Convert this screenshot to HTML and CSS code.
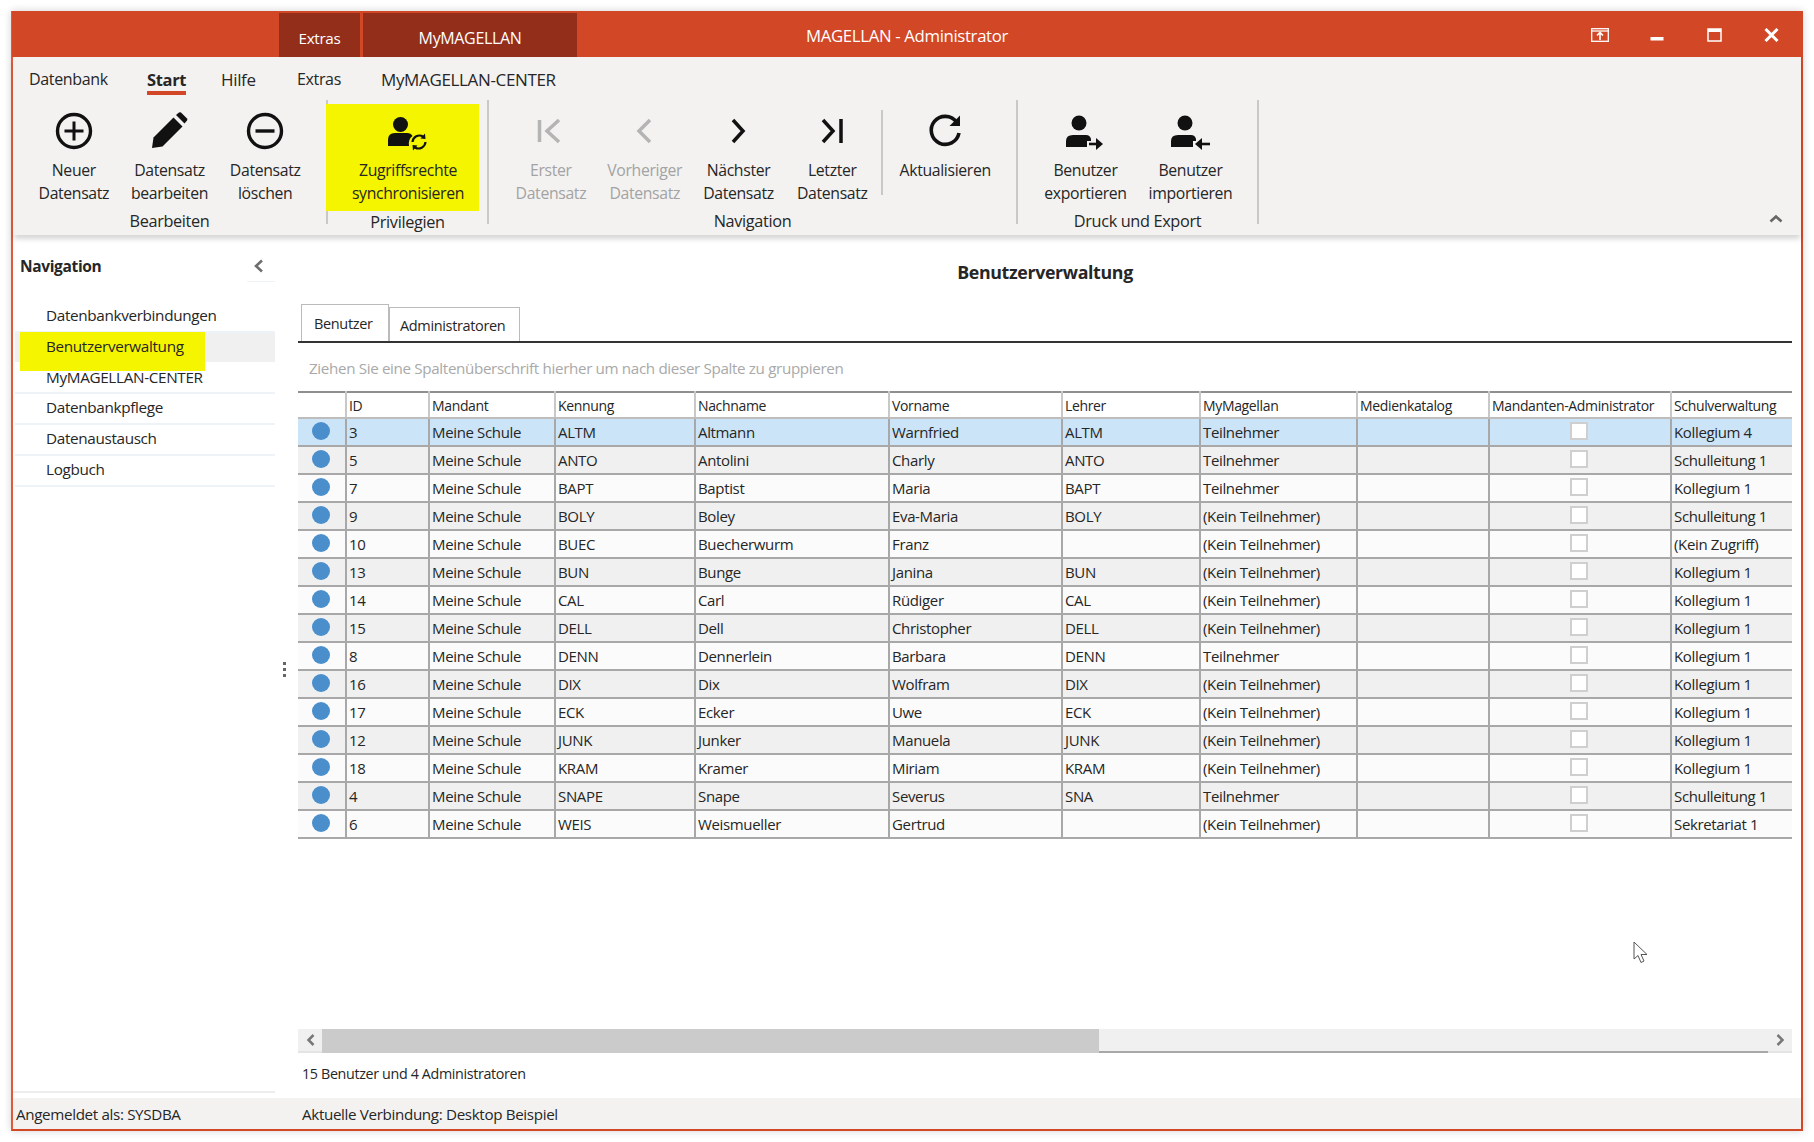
FILE: index.html
```html
<!DOCTYPE html>
<html lang="de">

<head>
    <meta charset="UTF-8">
    <title>MAGELLAN - Administrator</title>
    <link rel="stylesheet" href="styles.css">
</head>

<body>
    <div class="window">
        <!-- Title bar -->
        <header class="titlebar">
            <div class="context-tabs">
                <span class="context-tab context-extras">Extras</span>
                <span class="context-tab context-my">MyMAGELLAN</span>
            </div>
            <div class="title">MAGELLAN - Administrator</div>
            <div class="win-controls">
                <svg class="win-icon" width="18" height="14" viewBox="0 0 18 14" fill="none" stroke="#fff" stroke-width="1.3">
                    <rect x="0.7" y="0.7" width="16.6" height="12.6" />
                    <path d="M1 3h16" />
                    <path d="M9 12V5M6 7.5 9 4.5l3 3" stroke-width="1.6" />
                </svg>
                <svg class="win-icon" width="14" height="14" viewBox="0 0 14 14" fill="#fff">
                    <rect x="0.5" y="9" width="13" height="3.5" />
                </svg>
                <svg class="win-icon" width="15" height="14" viewBox="0 0 15 14" fill="none" stroke="#fff" stroke-width="1.5">
                    <rect x="1" y="1" width="13" height="12" />
                    <path d="M1 2.5h13" stroke-width="3" />
                </svg>
                <svg class="win-icon" width="15" height="14" viewBox="0 0 15 14" fill="none" stroke="#fff" stroke-width="3">
                    <path d="M1.5 1 13.500 13M13.500 1 1.500 13" />
                </svg>
            </div>
        </header>

        <!-- Ribbon -->
        <section class="ribbon">
            <nav class="ribbon-tabs">
                <span class="ribbon-tab tab-datenbank">Datenbank</span>
                <span class="ribbon-tab tab-start">Start</span>
                <span class="ribbon-tab tab-hilfe">Hilfe</span>
                <span class="ribbon-tab tab-extras">Extras</span>
                <span class="ribbon-tab">MyMAGELLAN-CENTER</span>
            </nav>
            <div class="ribbon-groups">
                <div class="group group-edit">
                    <div class="group-buttons">
                        <div class="rb rb-edit">
                            <svg class="rb-icon" width="40" height="40" viewBox="0 0 40 40" fill="none" stroke="#111" stroke-width="3.4">
                                <circle cx="20" cy="20" r="16.500" />
                                <path d="M20 10.500v19M10.500 20h19" stroke-width="3" />
                            </svg>
                            <span>Neuer<br>Datensatz</span>
                        </div>
                        <div class="rb rb-edit">
                            <svg class="rb-icon" width="40" height="40" viewBox="0 0 40 40" fill="#111">
                                <path d="M2 37 3.500 26.500 23.500 6.500 32.500 15.500 12.500 35.500Z" />
                                <path d="M26 4 29 1.500Q30 .8 31 1.500L37 7.500Q37.800 8.500 37 9.500L34.500 12.500Z" />
                            </svg>
                            <span>Datensatz<br>bearbeiten</span>
                        </div>
                        <div class="rb rb-edit">
                            <svg class="rb-icon" width="40" height="40" viewBox="0 0 40 40" fill="none" stroke="#111" stroke-width="3.4">
                                <circle cx="20" cy="20" r="16.500" />
                                <path d="M10.500 20h19" stroke-width="3.400" />
                            </svg>
                            <span>Datensatz<br>löschen</span>
                        </div>
                    </div>
                    <div class="group-label">Bearbeiten</div>
                </div>

                <div class="group group-priv">
                    <div class="group-buttons">
                        <div class="rb rb-marked">
                            <svg class="rb-icon" width="40" height="40" viewBox="0 0 40 40" fill="#111">
                                <circle cx="12.500" cy="13.500" r="7.500" />
                                <path d="M0 35V29Q0 22 7 22H19Q23 22 24.500 25 20 28 21 35Z" />
                                <g fill="none" stroke="#111" stroke-width="2.200">
                                    <path d="M24.500 31A7 7 0 0 1 35 25.500" />
                                    <path d="M37.500 31A7 7 0 0 1 27 36.500" />
                                </g>
                                <path d="M32.500 27.500 37.500 28 37 22.500ZM29.500 34.500 24.500 34 25 39.500Z" />
                            </svg>
                            <span>Zugriffsrechte<br>synchronisieren</span>
                        </div>
                    </div>
                    <div class="group-label">Privilegien</div>
                </div>

                <div class="group group-nav">
                    <div class="group-buttons">
                        <div class="rb rb-nav rb-off">
                            <svg class="rb-icon" width="40" height="40" viewBox="0 0 40 40" fill="none" stroke="#b4b4b4" stroke-width="3.500">
                                <path d="M8.500 9V31M28 9 16 20 28 31" />
                            </svg>
                            <span>Erster<br>Datensatz</span>
                        </div>
                        <div class="rb rb-nav rb-off">
                            <svg class="rb-icon" width="40" height="40" viewBox="0 0 40 40" fill="none" stroke="#b4b4b4" stroke-width="3.500">
                                <path d="M25 9 14 20 25 31" />
                            </svg>
                            <span>Vorheriger<br>Datensatz</span>
                        </div>
                        <div class="rb rb-nav">
                            <svg class="rb-icon" width="40" height="40" viewBox="0 0 40 40" fill="none" stroke="#111" stroke-width="3.500">
                                <path d="M15 9 25 20 15 31" />
                            </svg>
                            <span>Nächster<br>Datensatz</span>
                        </div>
                        <div class="rb rb-nav">
                            <svg class="rb-icon" width="40" height="40" viewBox="0 0 40 40" fill="none" stroke="#111" stroke-width="3.500">
                                <path d="M11 9 21 20 11 31M29 8V32" />
                            </svg>
                            <span>Letzter<br>Datensatz</span>
                        </div>
                        <div class="rb-sep"></div>
                        <div class="rb rb-refresh">
                            <svg class="rb-icon" width="40" height="40" viewBox="0 0 40 40" fill="none" stroke="#111" stroke-width="3.600">
                                <path d="M31.500 11A14 14 0 1 0 34 22" />
                                <path d="M35 4.500V15H24.500Z" fill="#111" stroke="none" />
                            </svg>
                            <span>Aktualisieren</span>
                        </div>
                    </div>
                    <div class="group-label">Navigation</div>
                </div>

                <div class="group group-export">
                    <div class="group-buttons">
                        <div class="rb rb-user">
                            <svg class="rb-icon" width="40" height="40" viewBox="0 0 40 40" fill="#111">
                                <circle cx="13" cy="12" r="7.500" />
                                <path d="M0 36V30Q0 24 7 24H20Q24 24 25 28V30H21V36Z" />
                                <path d="M23 33H31" fill="none" stroke="#111" stroke-width="2.600" />
                                <path d="M30 27 37 33 30 39Z" />
                            </svg>
                            <span>Benutzer<br>exportieren</span>
                        </div>
                        <div class="rb rb-user">
                            <svg class="rb-icon" width="40" height="40" viewBox="0 0 40 40" fill="#111">
                                <circle cx="14" cy="12" r="7.500" />
                                <path d="M0 36V30Q0 24 7 24H20Q24 24 25 28V30H22V36Z" />
                                <path d="M30 33H39" fill="none" stroke="#111" stroke-width="2.600" />
                                <path d="M31 27 24 33 31 39Z" />
                            </svg>
                            <span>Benutzer<br>importieren</span>
                        </div>
                    </div>
                    <div class="group-label">Druck und Export</div>
                </div>

                <svg class="ribbon-collapse" width="14" height="9" viewBox="0 0 14 9" fill="none" stroke="#666" stroke-width="2.600">
                    <path d="M1.500 7.500 7 2.500l5.500 5" />
                </svg>
            </div>
        </section>

        <!-- Navigation + content -->
        <div class="workspace">
            <aside class="sidebar">
                <div class="sidebar-head">
                    <span class="sidebar-title">Navigation</span>
                    <svg class="sidebar-chevron" width="11" height="14" viewBox="0 0 11 14" fill="none" stroke="#6e6e6e" stroke-width="2.600">
                        <path d="M9 1.500 3 7l6 5.500" />
                    </svg>
                </div>
                <ul class="sidebar-list">
                    <li>Datenbankverbindungen</li>
                    <li class="selected"><span class="marker"></span><span class="sidebar-text">Benutzerverwaltung</span></li>
                    <li>MyMAGELLAN-CENTER</li>
                    <li>Datenbankpflege</li>
                    <li>Datenaustausch</li>
                    <li>Logbuch</li>
                </ul>
            </aside>

            <div class="splitter"><i></i><i></i><i></i></div>

            <main class="content">
                <h1 class="content-title">Benutzerverwaltung</h1>
                <div class="page-tabs">
                    <span class="page-tab active">Benutzer</span>
                    <span class="page-tab">Administratoren</span>
                </div>
                <div class="group-hint">Ziehen Sie eine Spaltenüberschrift hierher um nach dieser Spalte zu gruppieren</div>
                <div class="grid-wrap">
                    <table class="grid">
                        <colgroup>
                            <col class="c-state"><col class="c-id"><col class="c-mandant"><col class="c-kennung">
                            <col class="c-nachname"><col class="c-vorname"><col class="c-lehrer"><col class="c-my">
                            <col class="c-medien"><col class="c-admin"><col class="c-schul">
                        </colgroup>
                        <thead>
                            <tr>
                                <th></th><th>ID</th><th>Mandant</th><th>Kennung</th><th>Nachname</th><th>Vorname</th>
                                <th>Lehrer</th><th>MyMagellan</th><th>Medienkatalog</th><th>Mandanten-Administrator</th><th>Schulverwaltung</th>
                            </tr>
                        </thead>
                        <tbody>
                            <tr class="current"><td><i class="dot"></i></td><td>3</td><td>Meine Schule</td><td>ALTM</td><td>Altmann</td><td>Warnfried</td><td>ALTM</td><td>Teilnehmer</td><td></td><td><i class="check"></i></td><td>Kollegium 4</td></tr>
                            <tr><td><i class="dot"></i></td><td>5</td><td>Meine Schule</td><td>ANTO</td><td>Antolini</td><td>Charly</td><td>ANTO</td><td>Teilnehmer</td><td></td><td><i class="check"></i></td><td>Schulleitung 1</td></tr>
                            <tr><td><i class="dot"></i></td><td>7</td><td>Meine Schule</td><td>BAPT</td><td>Baptist</td><td>Maria</td><td>BAPT</td><td>Teilnehmer</td><td></td><td><i class="check"></i></td><td>Kollegium 1</td></tr>
                            <tr><td><i class="dot"></i></td><td>9</td><td>Meine Schule</td><td>BOLY</td><td>Boley</td><td>Eva-Maria</td><td>BOLY</td><td>(Kein Teilnehmer)</td><td></td><td><i class="check"></i></td><td>Schulleitung 1</td></tr>
                            <tr><td><i class="dot"></i></td><td>10</td><td>Meine Schule</td><td>BUEC</td><td>Buecherwurm</td><td>Franz</td><td></td><td>(Kein Teilnehmer)</td><td></td><td><i class="check"></i></td><td>(Kein Zugriff)</td></tr>
                            <tr><td><i class="dot"></i></td><td>13</td><td>Meine Schule</td><td>BUN</td><td>Bunge</td><td>Janina</td><td>BUN</td><td>(Kein Teilnehmer)</td><td></td><td><i class="check"></i></td><td>Kollegium 1</td></tr>
                            <tr><td><i class="dot"></i></td><td>14</td><td>Meine Schule</td><td>CAL</td><td>Carl</td><td>Rüdiger</td><td>CAL</td><td>(Kein Teilnehmer)</td><td></td><td><i class="check"></i></td><td>Kollegium 1</td></tr>
                            <tr><td><i class="dot"></i></td><td>15</td><td>Meine Schule</td><td>DELL</td><td>Dell</td><td>Christopher</td><td>DELL</td><td>(Kein Teilnehmer)</td><td></td><td><i class="check"></i></td><td>Kollegium 1</td></tr>
                            <tr><td><i class="dot"></i></td><td>8</td><td>Meine Schule</td><td>DENN</td><td>Dennerlein</td><td>Barbara</td><td>DENN</td><td>Teilnehmer</td><td></td><td><i class="check"></i></td><td>Kollegium 1</td></tr>
                            <tr><td><i class="dot"></i></td><td>16</td><td>Meine Schule</td><td>DIX</td><td>Dix</td><td>Wolfram</td><td>DIX</td><td>(Kein Teilnehmer)</td><td></td><td><i class="check"></i></td><td>Kollegium 1</td></tr>
                            <tr><td><i class="dot"></i></td><td>17</td><td>Meine Schule</td><td>ECK</td><td>Ecker</td><td>Uwe</td><td>ECK</td><td>(Kein Teilnehmer)</td><td></td><td><i class="check"></i></td><td>Kollegium 1</td></tr>
                            <tr><td><i class="dot"></i></td><td>12</td><td>Meine Schule</td><td>JUNK</td><td>Junker</td><td>Manuela</td><td>JUNK</td><td>(Kein Teilnehmer)</td><td></td><td><i class="check"></i></td><td>Kollegium 1</td></tr>
                            <tr><td><i class="dot"></i></td><td>18</td><td>Meine Schule</td><td>KRAM</td><td>Kramer</td><td>Miriam</td><td>KRAM</td><td>(Kein Teilnehmer)</td><td></td><td><i class="check"></i></td><td>Kollegium 1</td></tr>
                            <tr><td><i class="dot"></i></td><td>4</td><td>Meine Schule</td><td>SNAPE</td><td>Snape</td><td>Severus</td><td>SNA</td><td>Teilnehmer</td><td></td><td><i class="check"></i></td><td>Schulleitung 1</td></tr>
                            <tr><td><i class="dot"></i></td><td>6</td><td>Meine Schule</td><td>WEIS</td><td>Weismueller</td><td>Gertrud</td><td></td><td>(Kein Teilnehmer)</td><td></td><td><i class="check"></i></td><td>Sekretariat 1</td></tr>
                        </tbody>
                    </table>
                    <svg class="cursor" width="16" height="23" viewBox="0 0 16 23" fill="#fff" stroke="#555" stroke-width="1">
                        <path d="M1 1V18L5 14.500 8 21.500 11 20 8 13.500H14Z" />
                    </svg>
                </div>
                <div class="scrollbar">
                    <div class="scroll-btn">
                        <svg width="9" height="12" viewBox="0 0 9 12" fill="none" stroke="#777" stroke-width="2.500"><path d="M7.500 1 2.500 6l5 5" /></svg>
                    </div>
                    <div class="scroll-thumb"></div>
                    <div class="scroll-track"></div>
                    <div class="scroll-btn">
                        <svg width="9" height="12" viewBox="0 0 9 12" fill="none" stroke="#777" stroke-width="2.500"><path d="M1.500 1l5 5-5 5" /></svg>
                    </div>
                </div>
                <div class="count">15 Benutzer und 4 Administratoren</div>
            </main>
        </div>

        <!-- Status bar -->
        <footer class="statusbar">
            <span class="status-user">Angemeldet als: SYSDBA</span>
            <span>Aktuelle Verbindung: Desktop Beispiel</span>
        </footer>
    </div>
</body>

</html>
```

FILE: styles.css
```css
/* General Reset */
* {
    margin: 0;
    padding: 0;
    box-sizing: border-box;
}

:root {
    --accent: #d24726;
    --accent-dark: #922e19;
    --ribbon-bg: #f3f2f1;
    --text: #262626;
    --text-off: #a3a3a3;
    --grid-line: #a8a8a8;
    --highlight: #f5f500;
}

body {
    width: 1814px;
    height: 1142px;
    overflow: hidden;
    background: #fff;
    font-family: "Open Sans", "Noto Sans", sans-serif;
    font-size: 15px;
    letter-spacing: -0.35px;
    color: var(--text);
}

.window {
    display: flex;
    flex-direction: column;
    width: 1792px;
    height: 1120px;
    margin: 11px 0 0 11px;
    border: 2px solid #e2583a;
    border-top: 1px solid var(--accent);
    border-bottom-color: var(--accent);
    border-right-color: var(--accent);
    box-shadow: 0 0 8px rgba(0, 0, 0, 0.18);
    background: #fff;
}

/* Title bar */
.titlebar {
    position: relative;
    display: flex;
    flex: 0 0 45px;
    margin: 0 -1px;
    background: var(--accent);
    color: #fff;
}

.context-tabs {
    display: flex;
    gap: 3px;
    margin-left: 267px;
    padding-top: 1px;
}

.context-tab {
    display: flex;
    align-items: center;
    justify-content: center;
    padding-top: 6px;
    background: var(--accent-dark);
    font-size: 15.300px;
}

.context-extras {
    width: 81px;
}

.context-my {
    width: 214px;
    font-size: 16px;
}

.title {
    position: absolute;
    left: 0;
    right: 0;
    top: 12px;
    text-align: center;
    font-size: 16.800px;
}

.win-controls {
    margin-left: auto;
    display: flex;
    align-items: flex-start;
    padding: 16px 23px 0 0;
}

.win-icon:nth-child(1) {
    margin-right: 41px;
}

.win-icon:nth-child(2) {
    margin-right: 43px;
}

.win-icon:nth-child(3) {
    margin-right: 42px;
}

/* Ribbon */
.ribbon {
    position: relative;
    z-index: 2;
    flex: 0 0 178px;
    background: var(--ribbon-bg);
    box-shadow: 0 5px 5px -1px rgba(0, 0, 0, 0.16);
}

.ribbon-tabs {
    display: flex;
    height: 43px;
    padding: 12px 0 0 16px;
    font-size: 17px;
    line-height: 21px;
}

.ribbon-tab {
    height: 29px;
}

.tab-datenbank {
    width: 118px;
    font-size: 16px;
}

.tab-start {
    width: 74px;
    font-size: 16.500px;
    font-weight: 700;
}

.tab-start::after {
    content: "";
    display: block;
    width: 39px;
    height: 4px;
    margin-top: 1px;
    background: var(--accent);
}

.tab-hilfe {
    width: 76px;
}

.tab-extras {
    width: 84px;
    font-size: 16px;
}

.ribbon-groups {
    position: relative;
    display: flex;
    height: 124px;
    margin-left: 13px;
}

.group {
    display: flex;
    flex-direction: column;
    border-right: 2px solid #c8c8c8;
    text-align: center;
}

.group-buttons {
    display: flex;
    flex: 0 0 110px;
}

.group-label {
    line-height: 20px;
    margin-top: 1px;
    font-size: 16.300px;
}

.group-edit {
    width: 302px;
    padding-right: 13px;
}

.group-priv {
    width: 161px;
}

.group-nav {
    width: 529px;
    padding-left: 15px;
}

.group-nav .group-label {
    margin-left: -15px;
}

.group-export {
    width: 241px;
    padding-left: 15px;
}

.group-export .group-label {
    margin-left: -15px;
}

.rb {
    display: flex;
    flex-direction: column;
    align-items: center;
    padding-top: 11px;
    line-height: 23px;
    white-space: nowrap;
    font-size: 15.800px;
}

.rb-icon {
    display: block;
    flex: none;
    margin-bottom: 8px;
}

.rb-edit {
    width: 96px;
}

.rb-nav {
    width: 93.800px;
}

.rb-user {
    width: 105px;
}

.rb-refresh {
    width: 124px;
}

.rb-off {
    color: var(--text-off);
}

.rb-sep {
    align-self: flex-start;
    width: 2px;
    height: 85px;
    margin: 10px 0 0 2px;
    background: #c8c8c8;
}

.rb-marked {
    width: 153px;
    height: 107px;
    margin: 4px 0 0 -2px;
    padding: 7px 0 0 11px;
    background: var(--highlight);
}

.ribbon-collapse {
    position: absolute;
    right: 18px;
    top: 114px;
}

/* Sidebar */
.workspace {
    display: flex;
    flex: 1;
    min-height: 0;
}

.sidebar {
    flex: 0 0 262px;
    border-bottom: 2px solid #ededed;
    margin-bottom: 5px;
}

.sidebar-head {
    position: relative;
    display: flex;
    justify-content: space-between;
    align-items: center;
    height: 46px;
    padding: 16px 11px 0 7px;
}

.sidebar-head::after {
    content: "";
    position: absolute;
    right: 0;
    bottom: -1px;
    width: 28px;
    height: 1px;
    background: #eef3f8;
}

.sidebar-title {
    font-weight: 700;
    font-size: 15.500px;
}

.sidebar-list {
    list-style: none;
    margin: 21px 0 0 2px;
    font-size: 15.300px;
}

.sidebar-list li {
    position: relative;
    height: 30.750px;
    padding: 0 0 0 31px;
    line-height: 26px;
    border-bottom: 2px solid #eef3f8;
}

.sidebar-list li.selected {
    background: #f0f0f0;
    border-bottom-color: #fff;
}

.marker {
    position: absolute;
    left: 5px;
    top: -1px;
    width: 185px;
    height: 39px;
    background: var(--highlight);
}

.sidebar-text {
    position: relative;
}

.splitter {
    display: flex;
    flex: 0 0 23px;
    flex-direction: column;
    align-items: flex-start;
    justify-content: center;
    gap: 3px;
    padding: 6px 0 0 8px;
}

.splitter i {
    width: 3px;
    height: 3px;
    background: #666;
}

/* Main content */
.content {
    display: flex;
    flex: 1;
    flex-direction: column;
    min-width: 0;
    padding-right: 9px;
}

.content-title {
    margin-top: 25px;
    text-align: center;
    font-size: 17.800px;
    line-height: 24px;
}

.page-tabs {
    display: flex;
    align-items: flex-end;
    height: 39px;
    margin-top: 20px;
    padding-left: 3px;
    border-bottom: 2px solid #333;
}

.page-tab {
    height: 34px;
    padding: 8px 12px 0 10px;
    border: 1px solid #bbb;
    border-bottom: none;
    font-size: 14.500px;
}

.page-tab:last-child {
    padding-right: 14px;
}

.page-tab.active {
    width: 88px;
    height: 37px;
    padding: 9px 0 0 12px;
}

.group-hint {
    height: 20px;
    margin-top: 15px;
    padding-left: 11px;
    line-height: 20px;
    color: #a9a9a9;
    font-size: 15.200px;
}

.grid-wrap {
    position: relative;
    flex: 1;
    margin-top: 13px;
}

.grid {
    width: 1494px;
    table-layout: fixed;
    border-collapse: collapse;
    font-size: 15px;
}

.c-state { width: 48px; }
.c-id { width: 83px; }
.c-mandant { width: 126px; }
.c-kennung { width: 140px; }
.c-nachname { width: 194px; }
.c-vorname { width: 173px; }
.c-lehrer { width: 138px; }
.c-my { width: 157px; }
.c-medien { width: 132px; }
.c-admin { width: 182px; }
.c-schul { width: 121px; }

.grid th,
.grid td {
    height: 28px;
    padding: 0 2px;
    border: 2px solid var(--grid-line);
    border-top: 0;
    text-align: left;
    font-weight: 400;
    white-space: nowrap;
    overflow: hidden;
}

.grid th {
    height: 26px;
    background: #fff;
    border-top: 2px solid #8f8f8f;
    border-bottom-color: #bdbdbd;
    border-left-color: #c8c8c8;
    border-right-color: #c8c8c8;
    font-size: 14px;
}

.grid tr th:first-child,
.grid tr td:first-child {
    border-left: 0;
}

.grid tr th:last-child,
.grid tr td:last-child {
    border-right: 0;
}

.grid tbody tr:nth-child(odd) td {
    background: #fbfbfb;
}

.grid tbody tr:nth-child(even) td {
    background: #f0f0f0;
}

.grid tbody tr.current td {
    background: #cce4f7;
}

.dot {
    display: block;
    width: 18px;
    height: 18px;
    margin: 0 0 3px 12px;
    border-radius: 50%;
    background: #4a8ecb;
}

.check {
    display: block;
    width: 18px;
    height: 18px;
    margin: 0 0 2px 78px;
    background: #fff;
    border: 2px solid #cfcfcf;
}

.cursor {
    position: absolute;
    left: 1335px;
    top: 550px;
}

.scrollbar {
    display: flex;
    flex: 0 0 24px;
    width: 1494px;
    background: #f0f0f0;
}

.scroll-btn {
    display: flex;
    flex: 0 0 24px;
    align-items: center;
    justify-content: center;
    border-bottom: 2px solid #e4e4e4;
}

.scroll-thumb {
    flex: 0 0 777px;
    background: #cbcbcb;
}

.scroll-track {
    flex: 1;
    border-bottom: 2px solid #a8a8a8;
}

.count {
    flex: 0 0 45px;
    padding: 11px 0 0 4px;
    font-size: 14.300px;
}

/* Status bar */
.statusbar {
    display: flex;
    flex: 0 0 31px;
    align-items: center;
    padding: 0 0 0 3px;
    background: var(--ribbon-bg);
    font-size: 15.200px;
}

.status-user {
    width: 286px;
}
```
